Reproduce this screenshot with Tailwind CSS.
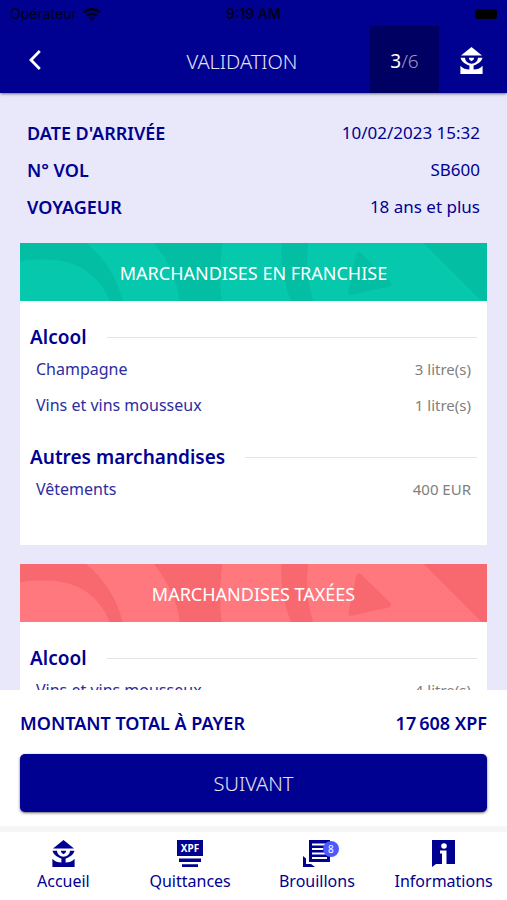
<!DOCTYPE html>
<html lang="fr">
<head>
<meta charset="utf-8">
<meta name="viewport" content="width=device-width, initial-scale=1">
<title>Validation</title>
<script src="https://cdn.jsdelivr.net/npm/@tailwindcss/browser@4"></script>
</head>
<body class="bg-white font-['Noto_Sans','Open_Sans',sans-serif] text-[#000091]">
<svg class="hidden" aria-hidden="true">
  <symbol id="tiki" viewBox="0 0 23 27">
    <path fill="currentColor" d="M11.500 0 22 8.600H1ZM.6 10.800H5a6.500 6 0 0 0 13 0h4.400C22 14 18.500 17 13.600 18.600V22.600C17 22.600 20.300 21.600 22.600 18.800V27H.4V18.800C2.700 21.600 6 22.600 9.400 22.600V18.600C4.500 17 1 14 .6 10.800ZM9 10.800h5c.4 1.600-1.100 2.800-2.500 3.400-1.400-.6-2.900-1.800-2.500-3.400Z"/>
  </symbol>
  <symbol id="motif" viewBox="0 0 468 59" preserveAspectRatio="xMidYMid slice">
    <path fill="currentColor" d="M0 0h66C83 14 97 34 103 59H90C80 33 58 17 26 17 16 17 8 17 0 19ZM134 0h69c-3 20-3 40-1 59h-42C158 38 148 18 134 0ZM262 0h27c-3 20-1 40 5 59h-22c-8-18-11-38-10-59ZM337 12c1-3 3-3 5-1l29 28c2 2 1 4-1 5l-37 8c-3 1-4 0-4-2ZM404 0h64v59h-5Z"/>
  </symbol>
</svg>
<div class="flex h-screen flex-col">
  <header class="relative z-10 shrink-0 bg-[#000091] shadow-sm shadow-black/40">
    <div class="grid h-7 grid-cols-3 items-center px-2.5 font-['Inter',sans-serif] text-sm leading-none text-[#00001c]">
      <span class="flex items-center gap-1.5">Opérateur
        <svg class="h-[13px] w-[18px]" viewBox="0 0 18 13" fill="none" stroke="currentColor" stroke-width="2.600" aria-hidden="true"><path d="M1 4.500a11.500 11.500 0 0 1 16 0M4 7.700a7.200 7.200 0 0 1 10 0"/><path d="M9 13 6 10a4.200 4.200 0 0 1 6 0Z" fill="currentColor" stroke="none"/></svg>
      </span>
      <span class="text-center font-semibold">9:19 AM</span>
      <span class="h-2.5 w-[22px] justify-self-end rounded-[3px] bg-black"></span>
    </div>
    <div class="-mt-0.5 flex h-[67px] items-stretch">
      <button type="button" aria-label="Retour" class="flex w-[70px] items-center justify-center text-white">
        <svg class="h-5 w-3" viewBox="0 0 12 20" fill="none" stroke="currentColor" stroke-width="2.800" aria-hidden="true"><path d="M10.800 1 2 10l8.800 9"/></svg>
      </button>
      <h1 class="flex flex-1 items-center justify-center pl-11 pt-1 text-xl font-light text-white/90">VALIDATION</h1>
      <div class="flex w-[69px] items-center justify-center bg-[#000063] pt-1 text-[19px] text-white"><span>3</span><span class="font-light text-white/60">/6</span></div>
      <a href="#accueil" aria-label="Accueil" class="flex w-[68px] items-center justify-center pr-1 pt-0.5 text-white"><svg class="h-[27px] w-[23px]" aria-hidden="true"><use href="#tiki"/></svg></a>
    </div>
  </header>

  <main class="min-h-0 flex-1 overflow-hidden bg-[#e8e8fa] px-5 pt-[26px]">
    <dl class="flex flex-col gap-[9px] px-[7px] text-[17px] leading-7">
      <div class="flex justify-between"><dt class="text-lg leading-7 font-semibold">DATE D'ARRIVÉE</dt><dd>10/02/2023 15:32</dd></div>
      <div class="flex justify-between"><dt class="text-lg leading-7 font-semibold">N° VOL</dt><dd>SB600</dd></div>
      <div class="flex justify-between"><dt class="text-lg leading-7 font-semibold">VOYAGEUR</dt><dd>18 ans et plus</dd></div>
    </dl>

    <section class="mt-[22px] bg-white pb-10">
      <h2 class="relative flex h-[58px] items-center justify-center bg-[#06c8ad] pt-0.5 text-lg text-white">
        <svg class="absolute inset-0 h-full w-full text-[#03bea2]" aria-hidden="true"><use href="#motif"/></svg>
        <span class="relative">MARCHANDISES EN FRANCHISE</span>
      </h2>
      <div class="flex flex-col gap-5 px-2.5 pt-5">
        <div>
          <h3 class="flex items-center gap-5 text-[19px] font-semibold leading-8">Alcool<span class="h-px flex-1 bg-[#e4e4e4]"></span></h3>
          <ul class="px-1.5 text-base leading-8">
            <li class="flex justify-between pb-1"><span class="text-[#2d2d9f]">Champagne</span><span class="text-[15px] text-[#808080]">3 litre(s)</span></li>
            <li class="flex justify-between"><span class="text-[#2d2d9f]">Vins et vins mousseux</span><span class="text-[15px] text-[#808080]">1 litre(s)</span></li>
          </ul>
        </div>
        <div>
          <h3 class="flex items-center gap-5 text-[19px] font-semibold leading-8">Autres marchandises<span class="h-px flex-1 bg-[#e4e4e4]"></span></h3>
          <ul class="px-1.5 text-base leading-8">
            <li class="flex justify-between"><span class="text-[#2d2d9f]">Vêtements</span><span class="text-[15px] text-[#808080]">400 EUR</span></li>
          </ul>
        </div>
      </div>
    </section>

    <section class="mt-[19px] bg-white pb-10">
      <h2 class="relative flex h-[58px] items-center justify-center bg-[#ff787e] pt-0.5 text-lg text-white">
        <svg class="absolute inset-0 h-full w-full text-[#f8696f]" aria-hidden="true"><use href="#motif"/></svg>
        <span class="relative">MARCHANDISES TAXÉES</span>
      </h2>
      <div class="px-2.5 pt-5">
        <h3 class="flex items-center gap-5 text-[19px] font-semibold leading-8">Alcool<span class="h-px flex-1 bg-[#e4e4e4]"></span></h3>
        <ul class="px-1.5 text-base leading-8">
          <li class="flex justify-between"><span class="text-[#2d2d9f]">Vins et vins mousseux</span><span class="text-[15px] text-[#808080]">4 litre(s)</span></li>
        </ul>
      </div>
    </section>
  </main>

  <footer class="relative shrink-0 bg-white">
    <div class="px-5 pb-3.5 pt-[18px]">
      <p class="flex justify-between text-lg font-semibold leading-[30px]"><span>MONTANT TOTAL À PAYER</span><span>17&#8239;608 XPF</span></p>
      <button type="button" class="mt-4 h-[58px] w-full rounded-[5px] bg-[#000091] pt-0.5 text-xl font-light text-white/90 shadow-sm shadow-black/50">SUIVANT</button>
    </div>
    <nav class="grid h-[74px] grid-cols-4 border-t-[6px] border-[#f6f6f6] pt-2 text-base leading-6">
      <a href="#accueil" class="flex flex-col items-center gap-0.5"><svg class="h-[27px] w-[23px]" aria-hidden="true"><use href="#tiki"/></svg>Accueil</a>
      <a href="#quittances" class="flex flex-col items-center gap-0.5">
        <svg class="h-[27px] w-[26px]" viewBox="0 0 26 27" fill="currentColor" aria-hidden="true"><path d="M0 0h26v16H0ZM2 18.500h22V22H2ZM5 24.300h16V27H5Z"/><text x="13" y="12" text-anchor="middle" fill="#fff" font-size="10" font-weight="700">XPF</text></svg>Quittances</a>
      <a href="#brouillons" class="flex flex-col items-center gap-0.5">
        <span class="relative"><svg class="h-[27px] w-[28px]" viewBox="0 0 28 27" fill="currentColor" aria-hidden="true"><path fill-rule="evenodd" d="M6 0h21v22H6ZM9 3.500v2h15v-2ZM9 8v2h15V8ZM9 12.500v2h15v-2ZM9 17v2h15v-2ZM0 16l3 2.500V24h5l4 3H0Z"/></svg><span class="absolute -right-2 top-px h-4 w-4 rounded-full bg-[#4d59ff] text-center text-[10px] leading-4 text-white">8</span></span>Brouillons</a>
      <a href="#informations" class="flex flex-col items-center gap-0.5">
        <svg class="h-[27px] w-[24px]" viewBox="0 0 24 27" aria-hidden="true"><path fill="currentColor" d="M0 0h23v24H4l-4 3Z"/><circle cx="12" cy="6" r="2.800" fill="#fff"/><path fill="#fff" d="M8 10.500h6.500V24H10V13.500H8Z"/></svg>Informations</a>
    </nav>
  </footer>
</div>
</body>
</html>
